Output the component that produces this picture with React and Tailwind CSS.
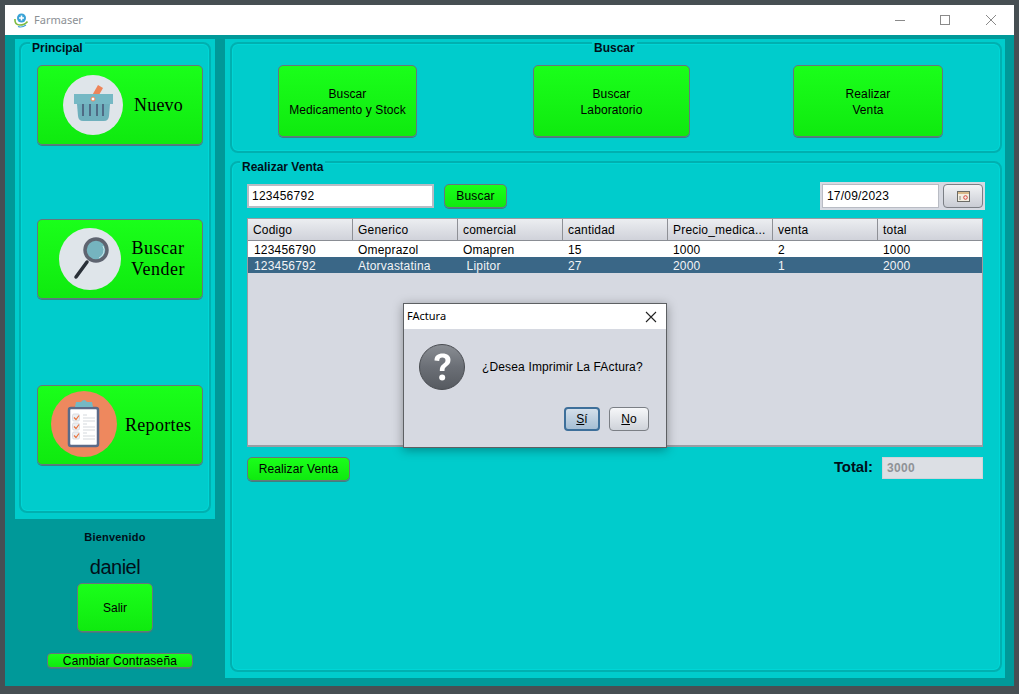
import React from 'react';

const sans = { fontFamily: '"Liberation Sans", Arial, sans-serif' };

const columns = ['Codigo', 'Generico', 'comercial', 'cantidad', 'Precio_medica...', 'venta', 'total'];
const rows = [
  ['123456790', 'Omeprazol', 'Omapren', '15', '1000', '2', '1000'],
  ['123456792', 'Atorvastatina', ' Lipitor', '27', '2000', '1', '2000'],
];

const greenBtn = 'flex items-center justify-center border border-[#66777c] bg-gradient-to-b from-[#1aff1a] to-[#0fea0f] text-black shadow-[0_1px_0_#3f7f7f]';

const BasketIcon = () => (
  <svg width="60" height="60" viewBox="0 0 60 60">
    <circle cx="30" cy="30" r="30" fill="#dfe5ea" />
    <path d="M27 24 L35 10 L40 13 L32 27 Z" fill="#ee8459" />
    <path d="M14 29 H47 L46 41 Q45.500 46 41 46 H20 Q15.500 46 15 41 Z" fill="#6fb0bd" />
    <rect x="11" y="19" width="39" height="10" fill="#75b8c4" />
    <path d="M20 29 V41 M27 29 V41 M34 29 V41 M40 29 V41" stroke="#4f6b85" strokeWidth="2" />
    <circle cx="30" cy="24" r="2" fill="#fff" stroke="#ee8459" />
  </svg>
);

const SearchIcon = () => (
  <svg width="62" height="62" viewBox="0 0 62 62">
    <circle cx="31" cy="31" r="31" fill="#dfe5ea" />
    <path d="M28 34 L17 49" stroke="#2a3038" strokeWidth="3.500" strokeLinecap="round" />
    <circle cx="37" cy="22" r="11" fill="#75b4bf" stroke="#5e6470" strokeWidth="3.500" />
    <path d="M44 18 A8.500 8.500 0 0 1 40 30" fill="none" stroke="#cfe8ec" strokeWidth="1" />
  </svg>
);

const ClipboardIcon = () => (
  <svg width="66" height="66" viewBox="0 0 66 66">
    <circle cx="33" cy="33" r="33" fill="#ee885e" />
    <rect x="18" y="17" width="29" height="38" rx="2" fill="#fff" stroke="#5b6a88" strokeWidth="2.500" />
    <path d="M24 16 L25 11 H30 Q33 7 36 11 H41 L42 16 Z" fill="#75b8c4" />
    {[23, 32, 41].map((y) => (
      <g key={y}>
        <rect x="21.500" y={y} width="7" height="7" rx="1.500" fill="#eceff2" stroke="#d9dde2" />
        <path d={`M23 ${y + 3.500} l2 2 l3 -4`} fill="none" stroke="#e9743f" strokeWidth="1.200" />
        <path d={`M32 ${y + 1} h4 M32 ${y + 4} h12 M32 ${y + 7} h12`} stroke="#d5d9de" strokeWidth="1.200" />
      </g>
    ))}
  </svg>
);

const AppLogo = () => (
  <svg width="14" height="15" viewBox="0 0 14 15">
    <circle cx="7.500" cy="5" r="4.500" fill="#3aa3d6" />
    <path d="M7.500 2.500 v5 M5 5 h5" stroke="#fff" strokeWidth="1.600" />
    <path d="M1 6 Q0.500 12 6 12 Q10.500 12 13.500 8.500" fill="none" stroke="#7dbb3e" strokeWidth="1.600" />
    <path d="M4 13.500 Q8 15 12 12" fill="none" stroke="#3aa3d6" strokeWidth="1.100" />
  </svg>
);

const CalendarIcon = () => (
  <svg width="13" height="11" viewBox="0 0 13 11">
    <rect x="0.500" y="0.500" width="12" height="10" fill="#f4efe2" stroke="#6b6b66" />
    <rect x="1" y="1" width="11" height="2" fill="#d9b98a" />
    <circle cx="8.500" cy="6.500" r="1.800" fill="none" stroke="#d8433f" />
    <path d="M3 5 v4" stroke="#8a8a85" />
  </svg>
);

const QuestionIcon = () => (
  <svg width="46" height="46" viewBox="0 0 46 46">
    <defs>
      <linearGradient id="qbg" x1="0" y1="0" x2="0" y2="1">
        <stop offset="0" stopColor="#8a8e94" />
        <stop offset="0.500" stopColor="#6b6f76" />
        <stop offset="1" stopColor="#565a60" />
      </linearGradient>
    </defs>
    <circle cx="23" cy="23" r="22.500" fill="url(#qbg)" stroke="#4a4d52" />
    <path
      d="M15.500 16.500 C15.500 11.500 19 9.500 23.500 9.500 C28.500 9.500 31.500 12 31.500 16 C31.500 19.500 29.500 21 27.500 22.500 C25.800 23.800 25.500 24.500 25.500 27 H20.800 C20.800 23.500 21.500 22 23.800 20.300 C25.500 19 26.500 18 26.500 16.300 C26.500 14.600 25.300 13.600 23.300 13.600 C21.300 13.600 20.200 14.800 20.200 16.900 Z"
      fill="#fff"
    />
    <circle cx="23.200" cy="33.500" r="3" fill="#fff" />
  </svg>
);

// titled panel border, like a java TitledBorder
const GroupBox = ({ title, titleClass, className, children }) => (
  <div className={`relative rounded-lg border-2 border-[#00b0b0] shadow-[inset_0_0_0_1px_#00d6d6] ${className}`}>
    <span className={`absolute -top-[3px] bg-[#00cccc] px-[2px] text-[12px] leading-[14px] font-bold text-[#00101a] ${titleClass}`}>
      {title}
    </span>
    {children}
  </div>
);

const SideButton = ({ icon, children, className }) => (
  <button className={`${greenBtn} h-[80px] w-[166px] justify-start! rounded-[5px] font-['Liberation_Serif'] text-[18px] ${className}`}>
    {icon}
    {children}
  </button>
);

const TopButton = ({ className, children }) => (
  <button className={`${greenBtn} h-[72px] rounded-[5px] pt-[1px] text-[12px] leading-[16px] tracking-[0.1px] ${className}`}>
    <span>{children}</span>
  </button>
);

const Dialog = () => (
  <div className="absolute left-[403px] top-[303px] flex h-[145px] w-[264px] flex-col border border-[#5d6063] bg-[#d6d9e1] shadow-[0_2px_10px_rgba(0,0,0,0.35)]">
    <div className="flex h-[25px] items-center justify-between bg-white pl-[3px] pr-[9px] font-['Noto_Sans'] text-[11px] text-black">
      <span>FActura</span>
      <svg width="12" height="12" viewBox="0 0 12 12">
        <path d="M1 1 L11 11 M11 1 L1 11" stroke="#222" strokeWidth="1.100" />
      </svg>
    </div>
    <div className="flex items-center pl-[15px] pt-[15px]">
      <QuestionIcon />
      <span className="ml-[17px] text-[12px] tracking-[0.15px] text-black">¿Desea Imprimir La FActura?</span>
    </div>
    <div className="mt-[17px] flex justify-end gap-[9px] pr-[17px]">
      <button className="flex h-[24px] w-[36px] items-center justify-center rounded-[4px] border-2 border-[#3d6f9a] bg-gradient-to-b from-[#d3dfea] to-[#a5bed4] text-[12px] text-black">
        <span><span className="underline">S</span>í</span>
      </button>
      <button className="flex h-[24px] w-[40px] items-center justify-center rounded-[4px] border border-[#7b7f85] bg-gradient-to-b from-[#f6f7f9] to-[#cfd3da] text-[12px] text-black">
        <span><span className="underline">N</span>o</span>
      </button>
    </div>
  </div>
);

export default function App() {
  return (
    <div className="relative h-[694px] w-[1019px] overflow-hidden bg-[#474f53] px-[5px] pb-[8px] pt-[5px]" style={sans}>
      <div className="flex h-full flex-col">
        {/* title bar */}
        <div className="flex h-[30px] shrink-0 items-center bg-white pl-[9px] pr-[17px]">
          <AppLogo />
          <span className="ml-[6px] font-['Noto_Sans'] text-[11px] text-[#8b8f94]">Farmaser</span>
          <div className="ml-auto flex items-center gap-[35px]">
            <div className="h-px w-[10px] bg-[#8a8a8a]" />
            <div className="h-[10px] w-[10px] border border-[#8a8a8a]" />
            <svg width="12" height="12" viewBox="0 0 12 12">
              <path d="M1 1 L11 11 M11 1 L1 11" stroke="#8a8a8a" strokeWidth="1" />
            </svg>
          </div>
        </div>

        {/* window body */}
        <div className="flex min-h-0 flex-1 bg-[#009999] pl-[10px] pt-[4px]">
          {/* left column */}
          <div className="flex w-[200px] shrink-0 flex-col">
            <div className="h-[480px] bg-[#00cccc] px-[4px] pb-[6px] pt-[3px]">
              <GroupBox title="Principal" titleClass="left-[9px]" className="flex h-full flex-col pl-[16px] pt-[21px]">
                <SideButton icon={<BasketIcon />} className="gap-[11px] pl-[25px]">
                  <span className="tracking-[0.2px]">Nuevo</span>
                </SideButton>
                <SideButton icon={<SearchIcon />} className="mt-[74px] gap-[10px] pl-[21px] leading-[21px]">
                  <span className="tracking-[0.5px]">Buscar<br />Vender</span>
                </SideButton>
                <SideButton icon={<ClipboardIcon />} className="mt-[86px] gap-[8px] pl-[13px] pb-[3px]">
                  <span className="pt-[3px] tracking-[0.3px]">Reportes</span>
                </SideButton>
              </GroupBox>
            </div>
            <div className="flex flex-col items-center text-[#00101a]">
              <span className="mt-[12px] text-[11px] font-bold leading-[13px] tracking-[0.2px]">Bienvenido</span>
              <span className="mt-[11px] text-[20px] leading-[24px] tracking-[-0.5px]">daniel</span>
              <button className={`${greenBtn} mt-[4px] h-[49px] w-[76px] rounded-[5px] text-[12px]`}>Salir</button>
              <button className={`${greenBtn} ml-[10px] mt-[21px] h-[15px] w-[146px] rounded-[4px] text-[12px] tracking-[0.2px]`}>
                Cambiar Contraseña
              </button>
            </div>
          </div>

          {/* right panel */}
          <div className="ml-[10px] flex h-[639px] w-[780px] shrink-0 flex-col bg-[#00cccc] pb-[6px] pl-[5px] pr-[3px] pt-[3px]">
            <GroupBox title="Buscar" titleClass="left-[360px]" className="flex h-[111px] shrink-0 pl-[46px] pt-[21px]">
              <TopButton className="w-[139px]">Buscar<br />Medicamento y Stock</TopButton>
              <TopButton className="ml-[116px] w-[157px]">Buscar<br />Laboratorio</TopButton>
              <TopButton className="ml-[103px] w-[150px]">Realizar<br />Venta</TopButton>
            </GroupBox>

            <GroupBox title="Realizar Venta" titleClass="left-[8px]" className="mt-[8px] flex min-h-0 flex-1 flex-col pl-[15px] pr-[17px] pt-[19px]">
              <div className="flex items-center">
                <div className="flex h-[24px] w-[187px] items-center border-2 border-[#b9bcc4] bg-white pl-[3px] text-[12px] tracking-[0.25px] text-black">
                  123456792
                </div>
                <button className={`${greenBtn} ml-[10px] h-[24px] w-[63px] rounded-[5px] text-[12px] tracking-[0.2px]`}>Buscar</button>
                <div className="ml-auto -mr-[2px] flex h-[28px] w-[165px] items-center gap-[4px] bg-[#d6d9e1] pl-[2px]">
                  <div className="flex h-[24px] w-[117px] items-center border border-[#b9bcc4] bg-white pl-[4px] text-[12px] tracking-[0.2px] text-black">
                    17/09/2023
                  </div>
                  <button className="flex h-[24px] w-[40px] items-center justify-center rounded-[4px] border border-[#7b7f85] bg-gradient-to-b from-[#f2f3f5] to-[#c9ccd4]">
                    <CalendarIcon />
                  </button>
                </div>
              </div>

              {/* table */}
              <div className="mt-[8px] h-[229px] w-[736px] border border-[#9a9da3] border-b-2 bg-[#d6d9e1] text-[12px] text-black">
                <div className="grid h-[22px] grid-cols-[105px_105px_105px_105px_105px_105px_104px] border-b border-[#8a8d94] bg-gradient-to-b from-[#eceef1] to-[#d0d2da]">
                  {columns.map((c) => (
                    <div key={c} className="flex items-center border-r border-[#8e9096] pl-[5px] tracking-[0.2px] last:border-r-0">{c}</div>
                  ))}
                </div>
                {rows.map((row, i) => (
                  <div
                    key={row[0]}
                    className={`grid h-[16px] grid-cols-[105px_105px_105px_105px_105px_105px_104px] items-center tracking-[0.2px] ${i === 1 ? 'bg-[#3a6787] text-[#f2f4f6]' : 'bg-white'}`}
                  >
                    {row.map((cell, j) => (
                      <div key={j} className={`whitespace-pre ${j === 0 ? 'pl-[6px]' : 'pl-[5px]'}`}>{cell}</div>
                    ))}
                  </div>
                ))}
              </div>

              <div className="mt-[10px] flex items-start">
                <button className={`${greenBtn} h-[24px] w-[103px] rounded-[5px] text-[12px] tracking-[0.1px]`}>Realizar Venta</button>
                <span className="ml-auto text-[15px] font-bold leading-[20px] tracking-[-0.1px] text-[#00101a]">Total:</span>
                <div className="ml-[9px] flex h-[22px] w-[101px] items-center border border-[#d0d3d9] bg-[#dcdfe4] pl-[4px] text-[12px] font-bold tracking-[0.3px] text-[#8f9296]">
                  3000
                </div>
              </div>
            </GroupBox>
          </div>
        </div>
      </div>

      <Dialog />
    </div>
  );
}
